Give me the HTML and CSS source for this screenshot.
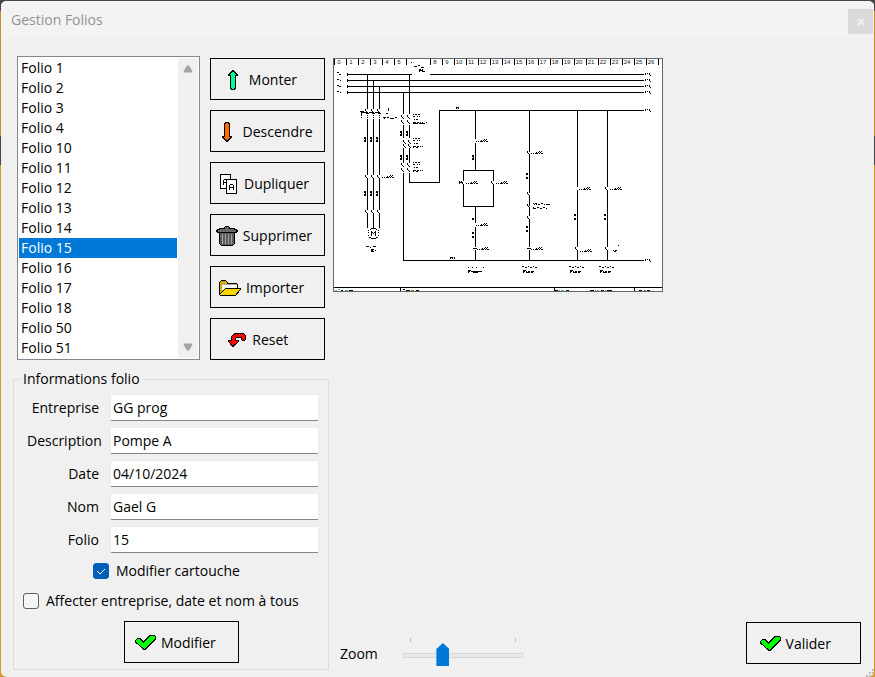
FILE: index.html
```html
<!DOCTYPE html>
<html lang="fr">
<head>
<meta charset="utf-8">
<title>Gestion Folios</title>
<link rel="stylesheet" href="styles.css">
</head>
<body>
<div class="window">
  <header class="titlebar">
    <h1 class="title">Gestion Folios</h1>
    <button class="close" type="button" aria-label="Fermer">
      <svg width="8" height="8" viewBox="0 0 8 8"><path d="M1 1l6 6M7 1L1 7" stroke="#f2f2f2" stroke-width="2"/></svg>
    </button>
  </header>
  <main class="content">
    <section class="left">
      <div class="folios">
        <div class="listbox">
          <select class="list" size="15" aria-label="Folios">
            <option>Folio 1</option><option>Folio 2</option><option>Folio 3</option><option>Folio 4</option><option>Folio 10</option><option>Folio 11</option><option>Folio 12</option><option>Folio 13</option><option>Folio 14</option><option selected>Folio 15</option><option>Folio 16</option><option>Folio 17</option><option>Folio 18</option><option>Folio 50</option><option>Folio 51</option>
          </select>
          <div class="scroll">
            <svg width="10" height="8" viewBox="0 0 10 8"><path d="M4 .5h2l3.500 6-.5 1H1l-.5-1z" fill="#a3a3a3"/></svg>
            <svg width="10" height="8" viewBox="0 0 10 8"><path d="M4 7.500h2l3.500-6-.5-1H1l-.5 1z" fill="#a3a3a3"/></svg>
          </div>
        </div>
        <div class="actions">
          <button class="btn" type="button"><span class="icon"><svg width="10" height="20" viewBox="0 0 10 20" shape-rendering="crispEdges"><path d="M4.500 .5h1v1h1v1h1v1h1v1h1v1h-2v13h-1v1h-3v-1h-1v-13h-2v-1h1v-1h1v-1h1v-1h1z" fill="#00fa9a" stroke="#000"/></svg></span>Monter</button>
          <button class="btn" type="button"><span class="icon"><svg width="10" height="20" viewBox="0 0 10 20" shape-rendering="crispEdges"><path d="M4.500 19.500h1v-1h1v-1h1v-1h1v-1h1v-1h-2v-13h-1v-1h-3v1h-1v13h-2v1h1v1h1v1h1v1h1z" fill="#ff6a00" stroke="#000"/></svg></span>Descendre</button>
          <button class="btn" type="button"><span class="icon"><svg width="17" height="20" viewBox="0 0 17 20" shape-rendering="crispEdges"><path d="M.5 .5h10v14H.5z" fill="#fff" stroke="#000"/><path d="M3.500 11V6.500l1-1h3M4 8.500h3" fill="none" stroke="#000"/><path d="M6.500 5.500h10v14h-10z" fill="#fff" stroke="#000"/><path d="M9.500 16v-4.500l1-1h2l1 1V16M10 13.500h3" fill="none" stroke="#000"/></svg></span>Dupliquer</button>
          <button class="btn" type="button"><span class="icon"><svg width="22" height="20" viewBox="0 0 22 20" shape-rendering="crispEdges"><path d="M3.500 6.500h15v11l-2 2h-11l-2-2z" fill="#5c5c5c" stroke="#000"/><path d="M6.500 8v10M9.500 8v10M12.500 8v10M15.500 8v10" stroke="#a0a0a0"/><path d="M8.500 2.500v-1l1-1h3l1 1v1h4l4 2v1l-2 1h-17l-2-1v-1l4-2z" fill="#686868" stroke="#000"/></svg></span>Supprimer</button>
          <button class="btn" type="button"><span class="icon"><svg width="22" height="16" viewBox="0 0 22 16" shape-rendering="crispEdges"><path d="M.5 14.500v-12l2-2h4l2 2v1h9l1 1v5L5 14.500z" fill="#d8a800" stroke="#000"/><path d="M3 4.500h15V10H3z" fill="#fff"/><path d="M3 4.500h14" stroke="#aaa"/><path d="M.5 14.500l1 1h15l5-6v-1h-15z" fill="#ffd500" stroke="#000"/></svg></span>Importer</button>
          <button class="btn" type="button"><span class="icon"><svg width="18" height="14" viewBox="0 0 18 14" shape-rendering="crispEdges"><path d="M7.500 .5h8l2 2v4l-1 1h-2l-1-1v-2h-5l-1 1v2h3v1l-5 4.500h-1l-4-4.500v-1h3v-4l2-2z" fill="#f00" stroke="#000"/></svg></span>Reset</button>
        </div>
      </div>
      <fieldset class="info">
        <legend>Informations folio</legend>
        <div class="fields">
          <label for="company">Entreprise</label><input id="company" type="text" value="GG prog">
          <label for="description">Description</label><input id="description" type="text" value="Pompe A">
          <label for="date">Date</label><input id="date" type="text" value="04/10/2024">
          <label for="name">Nom</label><input id="name" type="text" value="Gael G">
          <label for="folio">Folio</label><input id="folio" type="text" value="15">
        </div>
        <label class="check center"><input type="checkbox" checked>Modifier cartouche</label>
        <label class="check"><input type="checkbox">Affecter entreprise, date et nom à tous</label>
        <button class="btn apply" type="button"><span class="icon"><svg width="21" height="15" viewBox="0 0 21 15" shape-rendering="crispEdges"><path d="M.5 5.500l3-2.500h1l4 4L15 .5h4.500l1 1V4L10.500 14h-2l-8-7z" fill="#0f0" stroke="#000"/></svg></span>Modifier</button>
      </fieldset>
    </section>
    <section class="right">
      <svg class="preview" width="330" height="234" viewBox="333 58 330 234" shape-rendering="crispEdges" role="img" aria-label="Aperçu du folio">
        <defs>
          <path id="end" d="M0 .5h1M2 .5h1M4 .5h1M4 1.500h1M5 2.500h1M0 1.500h1"/>
          <path id="tag" d="M0 2.500h1M2 2.500h1M4 2.500h2M5 1.500h1M6 2.500h1M7 1.500h1M8 .5h1M10 .5h1M9 1.500h1M8 2.500h1M10 2.500h2"/>
          <path id="ref" d="M0 .5h2M0 1.500h2M1 2.500h1M0 3.500h2M0 4.500h2"/>
          <path id="pair" d="M0 .5h2M0 1.500h2M0 4.500h2M0 5.500h2"/>
          <path id="contact" d="M-2 .5h1M-2 1.500h1M-1 2.500h1M0 3.500h1"/>
          <path id="block" d="M0 .5h1M2 .5h2M5 .5h2M0 2.500h2M4 2.500h1M6 2.500h1M1 5.500h1M3 5.500h2M0 8.500h3M4 8.500h2M7 8.500h1M9 8.500h1M0 9.500h1M3 9.500h2"/>
          <path id="note" d="M0 .5h1M2 .5h2M5 1.500h2M8 .5h2M11 1.500h1M13 1.500h4M1 1.500h1M3 1.500h1M0 4.500h1M0 5.500h2M4 4.500h2M7 5.500h2M10 4.500h2M2 5.500h1M13 5.500h1"/>
          <path id="caption" d="M0 .5h2M3 1.500h2M6 .5h1M8 1.500h2M11 .5h1M13 1.500h2M1 4.500h3M1 5.500h2M4 5.500h1M6 5.500h2M9 5.500h3M1 6.500h1M4 6.500h4M9 6.500h2"/>
        </defs>
        <path fill="#fff" d="M333 58h330v234H333z"/>
        <g fill="none" stroke="#000">
          <path d="M334.500 59v6M346.500 59v6M358.500 59v6M370.500 59v6M382.500 59v6M394.500 59v6M406.500 59v6M430.500 59v6M442.500 59v6M454.500 59v6M466.500 59v6M478.500 59v6M490.500 59v6M502.500 59v6M514.500 59v6M526.500 59v6M538.500 59v6M550.500 59v6M562.500 59v6M574.500 59v6M586.500 59v6M598.500 59v6M610.500 59v6M622.500 59v6M634.500 59v6M646.500 59v6M658.500 59v6"/>
          <path d="M347.500 73v3M347.500 79v3M347.500 85v3M347.500 91v3M347 74.500h65M430 74.500h214M347 80.500h297M347 86.500h297M347 92.500h297"/>
          <path d="M367.500 74v35M373.500 80v29M379.500 86v23M367.500 119v56M373.500 119v56M379.500 119v56M367.500 179v31M373.500 179v31M379.500 179v31M367.500 213v15M373.500 213v15M379.500 213v15"/>
          <path d="M409.500 74v40M403.500 92v22M403.500 125v13M409.500 125v13M403.500 148v15M409.500 148v15M403.500 173v87.500H644M409.500 173v9.500h30v-72H644"/>
          <path d="M475.500 110v29M475.500 143v27M463.500 181v-10.500h30V181M463.500 184v22.500h30V184M475.500 206v17M475.500 227v20M475.500 250v10"/>
          <path d="M529.500 110v42M529.500 155v38M529.500 196v10M529.500 208v8M529.500 219v28M529.500 250v10M577.500 110v77M577.500 190v57M577.500 250v10M607.500 110v77M607.500 190v57M607.500 250v10"/>
          <path d="M333 287.500h330M400.500 287v5M554.500 287v5M634.500 287v5"/>
          <path d="M360 111.500h4M361 112.500h3M361.500 111v7M363 112.500h17M366 113.500h3M372 113.500h3M378 113.500h3" stroke-dasharray="5 1"/>
          <path d="M367.500 115v1M373.500 115v1M379.500 115v1M367.500 117v1M373.500 117v1M379.500 117v1M388.500 108v3M386 113.500h2M383 117.500h3M387 117.500h2M390 118.500h4M395 117.500h2M384 118.500h1"/>
          <path d="M414 66.500h3M418 65.500h2M421 67.500h3M419 69.500h2M422 69.500h1M419 70.500h4M419 71.500h1M422 71.500h3"/>
          <path d="M337 72.500h2M339 74.500h2M337 79.500h2M340 80.500h1M337 85.500h2M339 86.500h2M337 91.500h2M340 92.500h1"/>
          <path d="M456 107.500h3M456 108.500h1M458 108.500h1M450 257.500h3M454 257.500h1M450 258.500h1M452 258.500h1M454 258.500h1"/>
          <path d="M368 230.500h1M370 229.500h1M371 228.500h5M376 229.500h1M378 230.500h1M368 232.500h1M378 232.500h1M368 235.500h1M378 235.500h1M369 237.500h2M376 237.500h2M371 238.500h5M371.500 236v-5M372 232.500h1M373 233.500h1M374 232.500h1M375.500 236v-5M366 246.500h3M370 247.500h1M373 246.500h3M371 249.500h3M371 250.500h2M371 251.500h3M375 250.500h1"/>
          <path d="M459 182.500h4M459 181.500h1M459 183.500h1M473 248.500h4M527 248.500h4M617.500 245.500h1M613 250.500h1M615 250.500h2M614 251.500h2"/>
          <path d="M468 267.500h1M472 267.500h1M476 267.500h1M483 267.500h1M468 270.500h3M468 271.500h2M471 271.500h11M468 272.500h1M473 272.500h5"/>
          <path d="M335 290.500h2" stroke="#e8923c"/><path d="M338 289.500h2M345 290.500h3M561 290.500h3M597 290.500h2" stroke="#4aa3df"/><path d="M341 290.500h2M349 290.500h4M403 289.500h2M406 290.500h4M416 290.500h3M555 290.500h3M566 290.500h3M590 290.500h4M601 290.500h3M607 290.500h5M639 290.500h3M647 290.500h3"/><path d="M411 290.500h3M559 290.500h1M595 290.500h1M605 290.500h1M644 290.500h2" stroke="#a8641c"/>
          <use href="#end" x="645" y="73"/><use href="#end" x="645" y="79"/><use href="#end" x="645" y="85"/><use href="#end" x="645" y="91"/><use href="#end" x="645" y="109"/><use href="#end" x="645" y="259"/>
          <use href="#contact" x="367" y="109"/><use href="#contact" x="373" y="109"/><use href="#contact" x="379" y="109"/>
          <use href="#contact" x="367" y="175"/><use href="#contact" x="373" y="175"/><use href="#contact" x="379" y="175"/>
          <use href="#contact" x="367" y="210"/><use href="#contact" x="373" y="210"/><use href="#contact" x="379" y="210"/>
          <use href="#contact" x="403" y="115"/><use href="#contact" x="409" y="115"/><use href="#contact" x="403" y="120"/><use href="#contact" x="409" y="120"/>
          <use href="#contact" x="405" y="140"/><use href="#contact" x="410" y="140"/><use href="#contact" x="405" y="144"/><use href="#contact" x="410" y="144"/>
          <use href="#contact" x="403" y="163"/><use href="#contact" x="409" y="163"/><use href="#contact" x="403" y="168"/><use href="#contact" x="409" y="168"/>
          <use href="#contact" x="463" y="181"/><use href="#contact" x="493" y="181"/>
          <use href="#contact" x="529" y="151"/><use href="#contact" x="529" y="192"/><use href="#contact" x="529" y="204"/><use href="#contact" x="529" y="216"/>
          <use href="#contact" x="607" y="187"/><use href="#contact" x="577" y="247"/><use href="#contact" x="607" y="247"/>
          <use href="#tag" x="382" y="175"/><use href="#tag" x="476" y="139"/><use href="#tag" x="466" y="181"/><use href="#tag" x="496" y="181"/><use href="#tag" x="476" y="223"/><use href="#tag" x="477" y="247"/>
          <use href="#tag" x="531" y="151"/><use href="#tag" x="531" y="247"/><use href="#tag" x="579" y="187"/><use href="#tag" x="610" y="187"/><use href="#tag" x="580" y="249"/>
          <use href="#ref" x="364" y="137"/><use href="#ref" x="370" y="137"/><use href="#ref" x="376" y="137"/><use href="#ref" x="364" y="191"/><use href="#ref" x="370" y="191"/><use href="#ref" x="376" y="191"/>
          <use href="#ref" x="400" y="131"/><use href="#ref" x="406" y="131"/><use href="#ref" x="400" y="155"/><use href="#ref" x="406" y="155"/>
          <use href="#ref" x="472" y="155"/><path d="M472 218.500h2M472 219.500h2"/><use href="#pair" x="472" y="232"/><use href="#pair" x="526" y="173"/><use href="#pair" x="526" y="226"/><use href="#pair" x="574" y="214"/><use href="#pair" x="604" y="214"/>
          <use href="#block" x="413" y="114"/><use href="#block" x="413" y="138"/><use href="#block" x="413" y="162"/><path d="M413 123.500h4M419 123.500h6M426 122.500h1"/>
          <use href="#note" x="533" y="203"/>
          <use href="#caption" x="522" y="266"/><use href="#caption" x="569" y="266"/><use href="#caption" x="599" y="266"/>
        </g>
        <g class="marks">
          <text x="339" y="64">0</text><text x="351" y="64">1</text><text x="363" y="64">2</text><text x="375" y="64">3</text><text x="387" y="64">4</text><text x="399" y="64">5</text><text x="435" y="64">8</text><text x="447" y="64">9</text><text x="459" y="64">10</text><text x="471" y="64">11</text><text x="483" y="64">12</text><text x="495" y="64">13</text><text x="507" y="64">14</text><text x="519" y="64">15</text><text x="531" y="64">16</text><text x="543" y="64">17</text><text x="555" y="64">18</text><text x="567" y="64">19</text><text x="579" y="64">20</text><text x="591" y="64">21</text><text x="603" y="64">22</text><text x="615" y="64">23</text><text x="627" y="64">24</text><text x="639" y="64">25</text><text x="651" y="64">26</text>
        </g>
        <path d="M411 62h1v1h-1z"/>
        <path d="M333.500 58.500h329v233h-329z" fill="none" stroke="#666"/>
      </svg>
      <footer class="bottom">
        <label for="zoom">Zoom</label>
        <div class="slider"><div class="ticks"></div><input id="zoom" type="range" min="0" max="100" value="29"></div>
        <button class="btn validate" type="button"><span class="icon"><svg width="21" height="15" viewBox="0 0 21 15" shape-rendering="crispEdges"><path d="M.5 5.500l3-2.500h1l4 4L15 .5h4.500l1 1V4L10.500 14h-2l-8-7z" fill="#0f0" stroke="#000"/></svg></span>Valider</button>
      </footer>
    </section>
  </main>
  <svg class="grip" width="8" height="8" viewBox="0 0 8 8"><path d="M6 0h2v2H6zM3 3h2v2H3zM6 3h2v2H6zM0 6h2v2H0zM3 6h2v2H3zM6 6h2v2H6z" fill="#bdbdbd"/></svg>
</div>
</body>
</html>
```
FILE: styles.css
```css
* { box-sizing: border-box; }
body {
  margin: 0;
  background: linear-gradient(#484547 11px, #c88f2c 11px, #c88f2c 136px, #484547 136px, #484547 165px, #d69a24 165px);
  color: #000;
  font: 14px/20px "Open Sans", "Noto Sans", sans-serif;
}
button, input, select { font: inherit; color: inherit; }
.window {
  position: relative;
  display: flex;
  flex-direction: column;
  min-height: 100vh;
  margin: 0 1px;
  border-bottom: 1px solid #c08a30;
  border-top: 1px solid #484547;
  border-radius: 6px;
  background: #f0f0f0;
  overflow: hidden;
}
.titlebar {
  display: flex;
  align-items: center;
  justify-content: space-between;
  height: 37px;
  padding: 0 1px 0 10px;
  background: #f3f3f3;
}
.title { margin: 0; font-size: 14px; font-weight: 400; color: #929292; }
.close {
  display: grid;
  place-items: center;
  width: 25px;
  height: 25px;
  margin-top: 4px;
  padding: 0;
  border: 0;
  background: #dadada;
}
.content { display: flex; flex: 1; padding: 18px 13px 7px 12px; }
.left { display: flex; flex-direction: column; width: 316px; }
.folios { display: flex; gap: 10px; padding: 0 4px; }
.listbox {
  display: flex;
  flex: 1;
  border: 1px solid #828790;
  background: #fff;
  padding: 1px;
}
.list {
  flex: 1;
  height: 300px;
  padding: 0 1px 0 0;
  border: 0;
  outline: 0;
  border-radius: 0;
  background: #fff;
  overflow: hidden;
  scrollbar-width: none;
}
.list option { height: 20px; min-height: 20px; padding: 0 2px; line-height: 22px; }
.list option:checked { background: #0078d7 linear-gradient(#0078d7, #0078d7); color: #fff; }
.scroll {
  display: flex;
  flex-direction: column;
  align-items: center;
  justify-content: space-between;
  width: 20px;
  padding: 7px 1px 7px 0;
  background: #f0f0f0;
}
.actions { display: flex; flex-direction: column; gap: 10px; padding-top: 2px; }
.btn {
  display: flex;
  align-items: center;
  width: 115px;
  height: 42px;
  padding: 1px 0 0;
  border: 1px solid #000;
  background: #f0f0f0;
  white-space: nowrap;
}
.btn::before { content: ""; flex: 2; }
.btn::after { content: ""; flex: 5; }
.icon { display: grid; place-items: center; width: 23px; margin-right: 4px; }
.info {
  margin: 9px 0 0;
  padding: 5px 9px 6px 9px;
  border: 1px solid #dcdcdc;
  min-width: 0;
}
.info legend { margin-left: -3px; padding: 0 3px; }
.fields { display: grid; grid-template-columns: 76px 1fr; row-gap: 6px; column-gap: 11px; align-items: center; }
.fields label { padding-left: 4px; text-align: right; white-space: nowrap; }
.fields input {
  width: 100%;
  min-width: 0;
  height: 27px;
  padding: 0 2px;
  border: 1px solid #ececec;
  border-bottom-color: #868686;
  border-radius: 2px;
  background: #fff;
  outline: 0;
}
.check { display: flex; align-items: center; gap: 7px; margin-top: 10px; white-space: nowrap; }
.center { margin-top: 8px; padding-left: 70px; }
.check input {
  appearance: none;
  width: 16px;
  height: 16px;
  margin: 0;
  border: 1px solid #5f5f5f;
  border-radius: 3px;
  background: #f6f6f6;
}
.check input:checked {
  border-color: #005fb8;
  background: #005fb8 url("data:image/svg+xml,%3Csvg xmlns='http://www.w3.org/2000/svg' viewBox='0 0 14 14'%3E%3Cpath d='M3 7l3 3 5-5' fill='none' stroke='white'/%3E%3C/svg%3E");
}
.apply { margin: 10px auto 0 101px; }
.right { display: flex; flex: 1; flex-direction: column; justify-content: space-between; padding: 2px 0 6px 4px; }
.preview { display: block; }
.marks { font: 6px "Liberation Sans", sans-serif; text-anchor: middle; fill: #123; }
.bottom { display: flex; align-items: center; padding-left: 7px; }
.bottom label { margin-top: 22px; }
.slider { width: 120px; margin: 16px 0 -2px 25px; }
.ticks { height: 4px; margin: 0 7px; border: solid #c4c4c4; border-width: 0 1px; }
.slider input {
  display: block;
  appearance: none;
  width: 100%;
  height: 23px;
  margin: 1px 0 0;
  background: linear-gradient(#d6d6d6, #d6d6d6) 0 10px / 100% 5px no-repeat;
}
.slider input::-webkit-slider-runnable-track {
  height: 23px;
  padding: 0 6px;
  background: linear-gradient(#e7eaea, #e7eaea) 1px 11px / 118px 3px no-repeat;
}
.slider input::-webkit-slider-thumb {
  appearance: none;
  width: 13px;
  height: 23px;
  background: #0078d7;
  clip-path: polygon(50% 0, 100% 6px, 100% 100%, 0 100%, 0 6px);
}
.validate { margin-left: auto; }
.grip { position: absolute; right: 0; bottom: 0; }
```
